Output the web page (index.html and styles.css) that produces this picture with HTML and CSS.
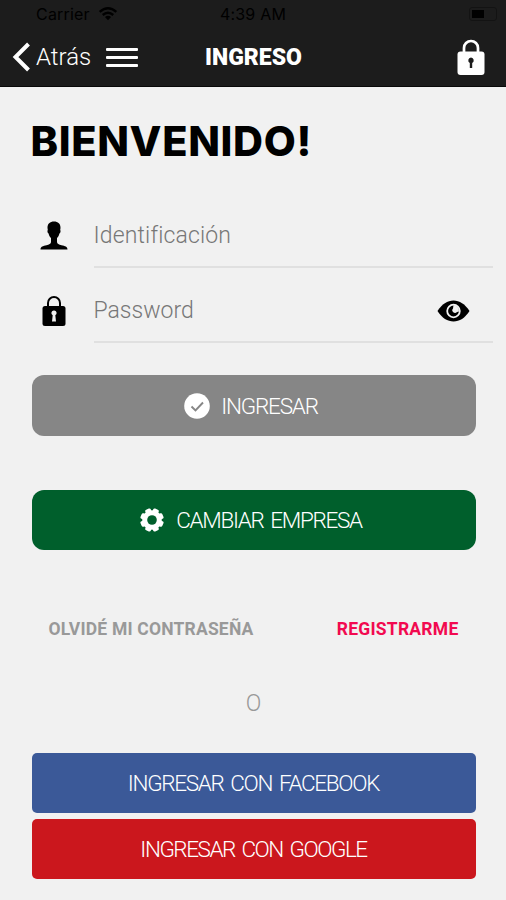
FILE: index.html
```html
<!DOCTYPE html>
<html lang="es">
<head>
<meta charset="utf-8">
<meta name="viewport" content="width=device-width, initial-scale=1">
<title>Ingreso</title>
<link rel="stylesheet" href="styles.css">
</head>
<body>
<header class="top">
  <div class="status">
    <div class="carrier"><span class="carrier-name">Carrier</span>
      <svg width="20" height="14" viewBox="0 0 22 16" fill="none" stroke="#000" stroke-width="2.8"><path d="M1.5 5.5Q11-2.5 20.500 5.500M5 9.200Q11 4 17 9.200"/><path d="M7.500 11.300Q11 8.500 14.500 11.300L11 15z" fill="#000" stroke="none"/></svg>
    </div>
    <span class="clock">4:39 AM</span>
    <span class="battery"><span class="charge"></span></span>
  </div>
  <nav class="nav">
    <div class="nav-left">
      <svg width="18" height="30" viewBox="0 0 18 30" fill="none" stroke="#fff" stroke-width="4"><path d="M16.500 2 3.500 15l13 13"/></svg>
      <span class="back">Atrás</span>
      <span class="burger"><i></i><i></i><i></i></span>
    </div>
    <h1 class="title">INGRESO</h1>
    <svg class="nav-lock" width="28" height="37" viewBox="0 0 28 37"><path d="M7 14V9a7 7 0 0 1 14 0v5" fill="none" stroke="#fff" stroke-width="2.700"/><rect x=".5" y="12.500" width="27" height="23.500" rx="3" fill="#fff"/><path d="M14 18.500a3 3 0 0 1 1.200 5.600V29h-2.400v-4.900A3 3 0 0 1 14 18.500z" fill="#1c1c1c"/></svg>
  </nav>
</header>
<main class="main">
  <h2 class="welcome">BIENVENIDO!</h2>
  <form class="form">
    <div class="row">
      <svg class="row-icon" width="28" height="30" viewBox="0 0 28 30"><path d="M14 .5c-4 0-6.700 2.300-6.500 6.500l.3 2c-.8.800-.2 3.200.8 3.600.4 2.500 1.400 3.500 2.400 4.400v4c0 2-2 2.500-4.500 3.200C3 25 .5 25.500.5 28.500h27c0-3-2.500-3.500-6-4.300C19 23.500 17 23 17 21v-4c1-.9 2-1.900 2.400-4.400 1-.4 1.600-2.800.8-3.600l.3-2C20.700 2.800 18 .5 14 .5z"/></svg>
      <label class="field"><span class="hint hint-id">Identificación</span></label>
    </div>
    <div class="row">
      <svg class="row-icon" width="28" height="32" viewBox="0 0 28 32"><path d="M8 12V8a6 6 0 0 1 12 0v4" fill="none" stroke="#000" stroke-width="2"/><rect x="2.500" y="11" width="23" height="20" rx="2.500"/><path d="M14 15.500a2.500 2.500 0 0 1 1.300 4.700l.7 6.300h-4l.7-6.300A2.500 2.500 0 0 1 14 15.500z" fill="#f1f1f1"/></svg>
      <label class="field"><span class="hint hint-pass">Password</span>
        <svg class="eye" width="33" height="22" viewBox="0 0 33 22"><path d="M.5 11C5 4 10.500.5 16.500.5S28 4 32.500 11C28 18 22.500 21.500 16.500 21.500S5 18 .5 11z"/><circle cx="16.500" cy="11" r="6.300" fill="none" stroke="#f1f1f1" stroke-width="1.800"/><path d="M16.500 5a6 6 0 0 1 5.500 6.500l-2 .5a2.600 2.600 0 0 1-4-3.500z" fill="#f1f1f1"/></svg>
      </label>
    </div>
  </form>
  <div class="btn btn-login">
    <svg width="26" height="26" viewBox="0 0 26 26"><circle cx="13" cy="13" r="12.800" fill="#fff"/><path d="m7.500 13.500 4 4L19 9.500" fill="none" stroke="#868686" stroke-width="1.900"/></svg>
    <span class="t-login">INGRESAR</span>
  </div>
  <div class="btn btn-company">
    <svg width="24" height="24" viewBox="-12 -12 24 24"><g fill="#fff"><circle r="9.800"/><rect x="-3" y="-11.800" width="6" height="23.600" rx="1.600" transform="rotate(22.500)"/><rect x="-3" y="-11.800" width="6" height="23.600" rx="1.600" transform="rotate(67.500)"/><rect x="-3" y="-11.800" width="6" height="23.600" rx="1.600" transform="rotate(112.500)"/><rect x="-3" y="-11.800" width="6" height="23.600" rx="1.600" transform="rotate(157.500)"/></g><circle r="4.800" fill="#005f2c"/></svg>
    <span class="t-company">CAMBIAR EMPRESA</span>
  </div>
  <div class="links"><span class="forgot">OLVIDÉ MI CONTRASEÑA</span><span class="register">REGISTRARME</span></div>
  <p class="or">O</p>
  <div class="btn btn-facebook"><span class="t-facebook">INGRESAR CON FACEBOOK</span></div>
  <div class="btn btn-google"><span class="t-google">INGRESAR CON GOOGLE</span></div>
</main>
</body>
</html>
```
FILE: styles.css
```css
* { box-sizing: border-box; }
body { margin: 0; background: #f1f1f1; color: #000; font-family: Roboto, "Liberation Sans", sans-serif; font-weight: 300; }
h1, h2, p { margin: 0; }
svg { display: block; flex: none; }
span { white-space: nowrap; }
.top { height: 87px; background: #1c1c1c; border-bottom: 1px solid #090909; }
.status { height: 28px; display: grid; grid-template-columns: 1fr auto 1fr; align-items: center; padding: 0 9px 0 36px; font-family: Inter, sans-serif; font-weight: 400; font-size: 16px; color: #000; }
.carrier { display: flex; align-items: center; gap: 8px; }
.carrier-name { letter-spacing: 0.2px; }
.clock { margin-right: 27px; letter-spacing: 0.2px; }
.battery { justify-self: end; width: 28px; height: 14px; padding: 2px; border: 1px solid #131313; border-radius: 3px; }
.charge { display: block; width: 12px; height: 8px; background: #000; }
.nav { height: 58px; display: grid; grid-template-columns: 1fr auto 1fr; align-items: center; padding: 0 21px 0 12px; color: #fff; }
.nav-left { display: flex; align-items: center; }
.back { margin-left: 6px; width: 70px; font-size: 24px; }
.burger { width: 32px; display: grid; gap: 5px; }
.burger i { height: 3px; background: #fff; border-radius: 1px; }
.title { font-size: 23px; font-weight: 900; line-height: 28px; margin: 2px 0 0 10px; }
.nav-lock { justify-self: end; }
.main { padding: 0 30.500px 0 31.500px; }
.welcome { padding-top: 29px; height: 111px; font-family: Inter, sans-serif; font-size: 41.500px; line-height: 50px; font-weight: 800; letter-spacing: 0.650px; white-space: nowrap; margin-left: -1px; }
.form { margin-right: -17px; }
.row { height: 75px; display: flex; align-items: center; }
.row-icon { margin-left: 8px; }
.field { flex: 1; margin-left: 26px; height: 70px; border-bottom: 2px solid #e0e0e0; display: flex; align-items: center; justify-content: space-between; padding: 7px 23px 0 0; margin-bottom: 5px; align-self: flex-end; color: #777; font-size: 23px; }
.hint-id { letter-spacing: 0.15px; }
.btn { height: 60px; display: flex; align-items: center; justify-content: center; border-radius: 12px; color: #fff; font-size: 22.500px; letter-spacing: -1.200px; }
.btn-login { margin-top: 27px; background: #868686; height: 61px; gap: 11px; padding-right: 5px; }
.btn-company { margin-top: 54px; background: #005f2c; gap: 12px; padding-right: 5px; letter-spacing: -1.300px; word-spacing: 2.500px; }
.links { height: 139px; display: flex; justify-content: space-between; padding: 67px 17px 0 17px; font-weight: 700; font-size: 17.500px; line-height: 24px; }
.forgot { color: #999; letter-spacing: 0.200px; }
.register { color: #f20a50; letter-spacing: 0.250px; }
.or { height: 64px; line-height: 30px; text-align: center; font-size: 23px; color: #999; }
.btn-facebook { border-radius: 5px; background: #3b5998; letter-spacing: -1.300px; word-spacing: 2.500px; }
.btn-google { margin-top: 6px; border-radius: 5px; background: #cb171d; letter-spacing: -1.450px; word-spacing: 2.500px; }
```
